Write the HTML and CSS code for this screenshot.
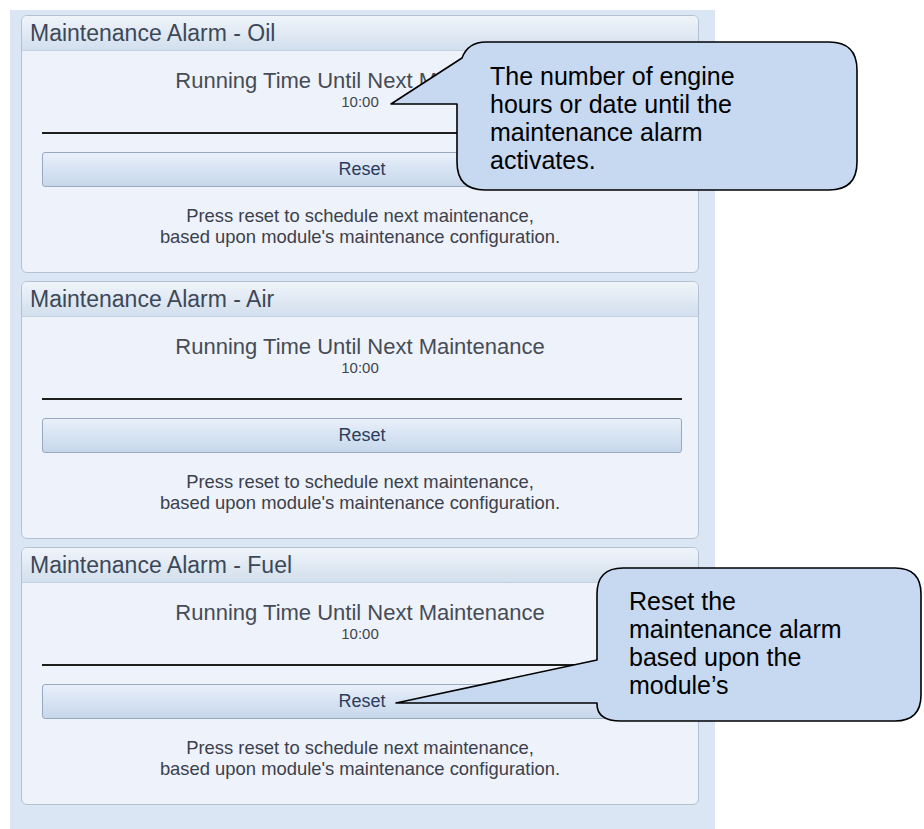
FILE: index.html
```html
<!DOCTYPE html>
<html lang="en">
<head>
    <meta charset="UTF-8">
    <meta name="viewport" content="width=device-width, initial-scale=1.0">
    <title>Maintenance Alarms</title>
    <link rel="stylesheet" href="styles.css">
</head>
<body>
    <div class="screen">
        <!-- Oil -->
        <div class="panel">
            <div class="panel-head">Maintenance Alarm - Oil</div>
            <div class="panel-body">
                <div class="label">Running Time Until Next Maintenance</div>
                <div class="value">10:00</div>
                <div class="rule"></div>
                <button class="reset-btn">Reset</button>
                <p class="note">Press reset to schedule next maintenance,<br>based upon module's maintenance configuration.</p>
            </div>
        </div>

        <!-- Air -->
        <div class="panel">
            <div class="panel-head">Maintenance Alarm - Air</div>
            <div class="panel-body">
                <div class="label">Running Time Until Next Maintenance</div>
                <div class="value">10:00</div>
                <div class="rule"></div>
                <button class="reset-btn">Reset</button>
                <p class="note">Press reset to schedule next maintenance,<br>based upon module's maintenance configuration.</p>
            </div>
        </div>

        <!-- Fuel -->
        <div class="panel">
            <div class="panel-head">Maintenance Alarm - Fuel</div>
            <div class="panel-body">
                <div class="label">Running Time Until Next Maintenance</div>
                <div class="value">10:00</div>
                <div class="rule"></div>
                <button class="reset-btn">Reset</button>
                <p class="note">Press reset to schedule next maintenance,<br>based upon module's maintenance configuration.</p>
            </div>
        </div>
    </div>

    <!-- Callouts drawn over the screenshot -->
    <div class="callout callout-time">
        <svg class="callout-shape" width="482" height="160" viewBox="0 0 482 160">
            <path d="M106 4 L449 4 Q477 4 477 32 L477 124 Q477 152 449 152 L105 152 Q77 152 77 124 L77 66 L11 66 L82 20 Q88 4 106 4 Z"
                  fill="#c6d9f1" stroke="#000" stroke-width="1.6" stroke-linejoin="round"/>
        </svg>
        <div class="callout-text">The number of engine<br>hours or date until the<br>maintenance alarm<br>activates.</div>
    </div>

    <div class="callout callout-reset">
        <svg class="callout-shape" width="539" height="166" viewBox="0 0 539 166">
            <path d="M238 4 L510 4 Q536 4 536 30 L536 131 Q536 157 510 157 L236 157 Q212 157 212 140 L212 139 L11 139 L212 96 L212 30 Q212 4 238 4 Z"
                  fill="#c6d9f1" stroke="#000" stroke-width="1.6" stroke-linejoin="round"/>
        </svg>
        <div class="callout-text">Reset the<br>maintenance alarm<br>based upon the<br>module’s</div>
    </div>
</body>
</html>
```

FILE: styles.css
```css
/* Global */
body {
    margin: 0;
    background-color: #ffffff;
    font-family: "Liberation Sans", Arial, sans-serif;
    color: #3e4651;
    overflow: hidden;
}

/* Window area */
.screen {
    margin: 10px 0 0 10px;
    width: 678px;
    min-height: calc(100vh - 15px);
    padding: 5px 16px 0 11px;
    background-color: #dae6f4;
    display: flex;
    flex-direction: column;
    gap: 8px;
}

/* Panels */
.panel {
    height: 258px;
    box-sizing: border-box;
    border: 1px solid #b3c1d2;
    border-radius: 6px;
    background-color: #eef2fb;
    overflow: hidden;
}

.panel-head {
    height: 34px;
    line-height: 34px;
    padding-left: 8px;
    font-size: 23px;
    color: #3c4858;
    background: linear-gradient(#f0f4fa, #d2dfed);
    border-bottom: 1px solid #c2d0e0;
}

.panel-body {
    padding: 18px 0 0;
    text-align: center;
}

.label {
    font-size: 22px;
    line-height: 24px;
    color: #464c55;
}

.value {
    font-size: 15px;
    line-height: 18px;
}

.rule {
    margin: 21px 16px 0 20px;
    border-top: 2px solid #1e1e1e;
}

.reset-btn {
    display: block;
    width: calc(100% - 36px);
    height: 35px;
    margin: 18px 16px 0 20px;
    border: 1px solid #98a9bf;
    border-radius: 3px;
    background: linear-gradient(#e9f0fa 0%, #d5e2f2 55%, #c7d7eb 100%);
    font-family: inherit;
    font-size: 18px;
    color: #2b3c5c;
}

.note {
    margin: 18px 0 0;
    font-size: 18.4px;
    line-height: 21px;
    color: #3b414c;
}

/* Callouts */
.callout {
    position: absolute;
}

.callout-shape {
    position: absolute;
    left: 0;
    top: 0;
}

.callout-text {
    position: relative;
    font-family: "Liberation Sans", Arial, sans-serif;
    font-size: 25px;
    line-height: 28px;
    color: #000000;
}

.callout-time {
    left: 380px;
    top: 38px;
    width: 482px;
    height: 160px;
}

.callout-time .callout-text {
    padding: 24px 0 0 110px;
}

.callout-reset {
    left: 385px;
    top: 564px;
    width: 539px;
    height: 166px;
}

.callout-reset .callout-text {
    padding: 23px 0 0 244px;
}
```
